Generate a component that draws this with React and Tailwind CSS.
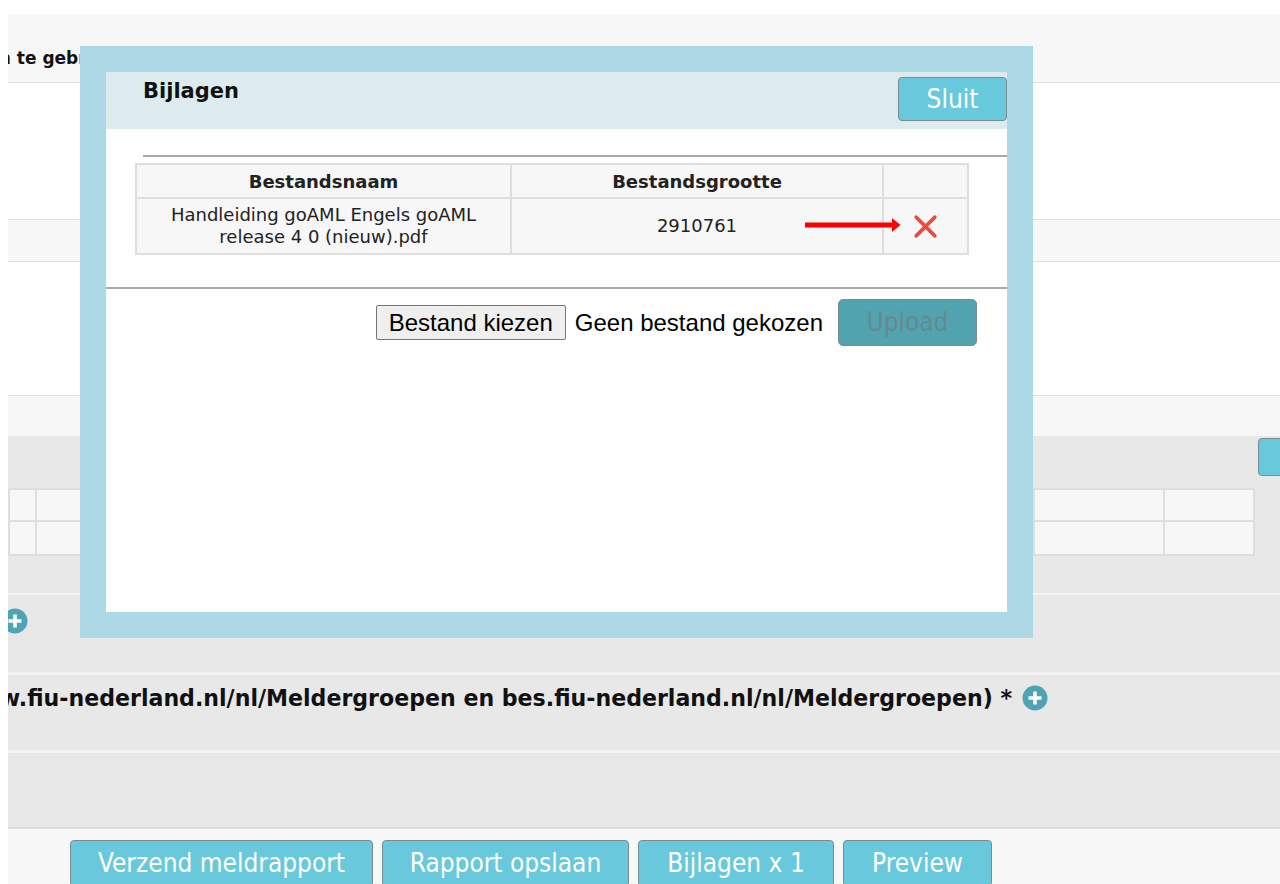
import { useState } from "react";

const files = [
  { name: "Handleiding goAML Engels goAML release 4 0 (nieuw).pdf", size: 2910761 },
];

const actions = ["Verzend meldrapport", "Rapport opslaan", "Bijlagen x 1", "Preview"];

function PlusIcon({ className = "" }) {
  return (
    <svg viewBox="0 0 26 26" className={className}>
      <circle cx="13" cy="13" r="12.5" fill="#4fa4b4" />
      <path d="M13 6.5v13M6.5 13h13" stroke="#fff" strokeWidth="3.6" />
    </svg>
  );
}

function Attachments({ onClose }) {
  return (
    <div className="absolute left-[80px] top-[46px] w-[953px] h-[592px] bg-[#add8e6] p-[26px]">
      <div className="h-full bg-white">
        {/* header */}
        <div className="flex items-start justify-between h-[57px] bg-[#deebee]">
          <h2 className="pl-[37px] pt-[6px] text-[21px] font-bold leading-[26px] text-[#111]">Bijlagen</h2>
          <button
            onClick={onClose}
            className="mt-[5px] w-[109px] h-[44px] rounded-[4px] border border-[#7b8c90] bg-[#68c9dd] text-white text-[26px] leading-none font-['DejaVu_Sans_Condensed','DejaVu_Sans',sans-serif]"
          >
            Sluit
          </button>
        </div>

        <div className="pt-[26px] pl-[29px]">
          <div className="ml-[8px] border-t-2 border-[#a9a9a9]" />
          <table className="mt-[6px] w-[834px] border-collapse bg-[#f7f7f7] text-[#222] text-center">
            <thead>
              <tr className="h-[34px] text-[18px] font-bold">
                <th className="w-[375px] border-2 border-[#dedede]">Bestandsnaam</th>
                <th className="w-[372px] border-2 border-[#dedede]">Bestandsgrootte</th>
                <th className="border-2 border-[#dedede]" />
              </tr>
            </thead>
            <tbody>
              {files.map((f) => (
                <tr key={f.name} className="h-[56px] text-[18px] leading-[22px]">
                  <td className="border-2 border-[#dedede] px-[28px]">{f.name}</td>
                  <td className="border-2 border-[#dedede]">{f.size}</td>
                  <td className="border-2 border-[#dedede]">
                    <div className="flex justify-center">
                      <svg viewBox="0 0 24 24" className="w-[25px] h-[25px] ml-[-1px]">
                        <path d="M3 3L21 21M21 3L3 21" stroke="#ec4a3c" strokeWidth="3.4" strokeLinecap="round" />
                      </svg>
                    </div>
                  </td>
                </tr>
              ))}
            </tbody>
          </table>
        </div>

        <div className="mt-[32px] border-t-2 border-[#a9a9a9]" />
        <div className="flex items-center justify-end pr-[30px] pt-[10px] font-['Liberation_Sans',Arial,sans-serif]">
          <button className="h-[35px] px-[12px] border border-[#767676] rounded-[2px] bg-[#efefef] text-[24px] text-black leading-none">
            Bestand kiezen
          </button>
          <span className="ml-[9px] text-[24px] text-black">Geen bestand gekozen</span>
          <button
            disabled
            className="ml-[15px] w-[139px] h-[47px] rounded-[5px] border border-[#7b8c90] bg-[#52a3b0] text-[#648990] text-[26px] font-['DejaVu_Sans_Condensed','DejaVu_Sans',sans-serif]"
          >
            Upload
          </button>
        </div>
      </div>

      {/* pointer to the delete icon */}
      <svg viewBox="0 0 96 14" className="absolute left-[725px] top-[172px] w-[96px] h-[14px]">
        <path d="M0 4.5H88V9.5H0z" fill="#f00" />
        <path d="M87 0L95.5 7L87 14z" fill="#f00" />
      </svg>
    </div>
  );
}

export default function App() {
  const [open, setOpen] = useState(true);

  return (
    <div className="relative w-[1280px] h-[884px] overflow-hidden bg-white pl-[8px] pt-[14px] font-['DejaVu_Sans',Verdana,sans-serif] text-[#111]">
      <div className="overflow-hidden">
        <div className="h-[69px] bg-[#f7f7f7] border-b border-[#e0e0e0]">
          <p className="ml-[-15px] pt-[34px] text-[17px] font-bold leading-[20px] whitespace-nowrap">
            in te gebruiken
          </p>
        </div>
        <div className="h-[137px] border-b border-[#e0e0e0]" />
        <div className="h-[42px] bg-[#f7f7f7] border-b border-[#e0e0e0]" />
        <div className="h-[134px] border-b border-[#e0e0e0]" />
        <div className="h-[40px] bg-[#f7f7f7]" />

        <div className="h-[157px] bg-[#e8e8e8] pt-[2px]">
          <div className="flex justify-end">
            <button className="w-[40px] h-[38px] mr-[-18px] rounded-[4px] border border-[#7b8c90] bg-[#68c9dd]" />
          </div>
          <div className="mt-[12px] w-[1247px] grid grid-cols-[27px_1fr_130px_88px] bg-[#f7f7f7] border-2 border-[#dedede]">
            {[0, 1].map((r) =>
              [0, 1, 2, 3].map((c) => (
                <div
                  key={`${r}-${c}`}
                  className={`h-[32px] ${c < 3 ? "border-r-2" : ""} ${r === 0 ? "border-b-2" : ""} border-[#dedede]`}
                />
              ))
            )}
          </div>
        </div>

        <div className="h-[2px] bg-[#f4f4f4]" />
        <div className="h-[77px] bg-[#e8e8e8] pt-[13px]">
          <PlusIcon className="ml-[-6px] w-[26px] h-[26px]" />
        </div>
        <div className="h-[3px] bg-[#f4f4f4]" />
        <div className="h-[75px] bg-[#e8e8e8] pt-[9px]">
          <p className="flex items-center ml-[-49px] text-[22.1px] font-bold leading-[28px] whitespace-nowrap">
            www.fiu-nederland.nl/nl/Meldergroepen en bes.fiu-nederland.nl/nl/Meldergroepen) *
            <PlusIcon className="ml-[10px] w-[26px] h-[26px]" />
          </p>
        </div>
        <div className="h-[3px] bg-[#f4f4f4]" />
        <div className="h-[74px] bg-[#e8e8e8]" />
        <div className="h-[2px] bg-[#dcdcdc]" />
        <div className="h-[60px] bg-[#f7f7f7] pt-[11px] pl-[62px] flex gap-[9px] items-start">
          {actions.map((a, i) => (
            <button
              key={a}
              className={`h-[46px] rounded-[4px] border border-[#7b8c90] bg-[#68c9dd] text-white text-[26px] leading-none font-['DejaVu_Sans_Condensed','DejaVu_Sans',sans-serif] ${
                ["w-[303px]", "w-[247px]", "w-[196px]", "w-[149px]"][i]
              }`}
            >
              {a}
            </button>
          ))}
        </div>
      </div>

      {open && <Attachments onClose={() => setOpen(false)} />}
    </div>
  );
}
